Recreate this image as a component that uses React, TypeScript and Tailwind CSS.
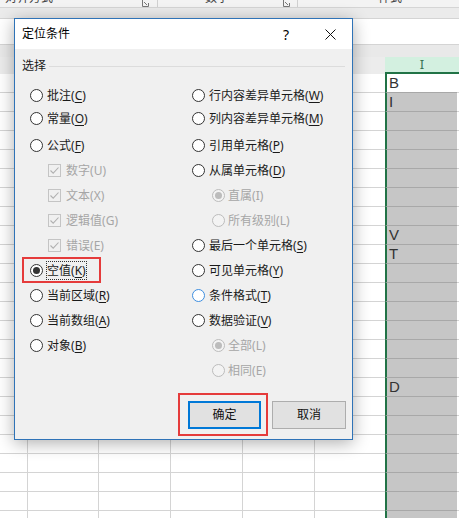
import React from "react";

type Item = {
  t: string;
  k: string;
  kind?: "radio" | "check" | "sub";
  disabled?: boolean;
  checked?: boolean;
  focus?: boolean;
  blue?: boolean;
};

const left: Item[] = [
  { t: "批注", k: "C" },
  { t: "常量", k: "O" },
  { t: "公式", k: "F" },
  { t: "数字", k: "U", kind: "check", disabled: true },
  { t: "文本", k: "X", kind: "check", disabled: true },
  { t: "逻辑值", k: "G", kind: "check", disabled: true },
  { t: "错误", k: "E", kind: "check", disabled: true },
  { t: "空值", k: "K", checked: true, focus: true },
  { t: "当前区域", k: "R" },
  { t: "当前数组", k: "A" },
  { t: "对象", k: "B" },
];

const right: Item[] = [
  { t: "行内容差异单元格", k: "W" },
  { t: "列内容差异单元格", k: "M" },
  { t: "引用单元格", k: "P" },
  { t: "从属单元格", k: "D" },
  { t: "直属", k: "I", kind: "sub", disabled: true, checked: true },
  { t: "所有级别", k: "L", kind: "sub", disabled: true },
  { t: "最后一个单元格", k: "S" },
  { t: "可见单元格", k: "Y" },
  { t: "条件格式", k: "T", blue: true },
  { t: "数据验证", k: "V" },
  { t: "全部", k: "L", kind: "sub", disabled: true, checked: true },
  { t: "相同", k: "E", kind: "sub", disabled: true },
];

function rowMargin(i: number) {
  if (i === 1) return "-mt-[2px]";
  if (i === 2) return "mt-[2px]";
  return "";
}

function Radio({ item }: { item: Item }) {
  const border = item.disabled
    ? "border-[#bcbcbc] bg-[#f3f3f3]"
    : item.blue
    ? "border-[#3d8ee0] bg-white"
    : "border-[#333333] bg-white";
  const dot = item.disabled ? "bg-[#bcbcbc]" : "bg-[#333333]";
  return (
    <div className={`w-[13px] h-[13px] rounded-full border ${border} flex items-center justify-center shrink-0`}>
      {item.checked ? <div className={`w-[7px] h-[7px] rounded-full ${dot}`} /> : null}
    </div>
  );
}

function Check() {
  return (
    <div className="w-[13px] h-[13px] border border-[#c4c4c4] shrink-0 flex items-center justify-center">
      <svg width="11" height="11" viewBox="0 0 11 11">
        <path d="M1.5 5.5 L4.2 8.2 L9.5 2.5" fill="none" stroke="#b0b0b0" strokeWidth="1.1" />
      </svg>
    </div>
  );
}

function LabelText({ item }: { item: Item }) {
  const color = item.disabled ? "text-[#a6a6a6]" : "text-[#1a1a1a]";
  const inner = (
    <>
      {item.t}(
      {item.disabled ? item.k : <span className="underline decoration-1 underline-offset-[2px]">{item.k}</span>})
    </>
  );
  if (item.focus) {
    return (
      <span className={`ml-[3px] border border-dotted border-[#333] h-[19px] leading-[17px] ${color}`}>{inner}</span>
    );
  }
  return <span className={`${item.kind === "check" ? "ml-[5px]" : item.kind === "sub" ? "ml-[3px]" : "ml-[4px]"} ${color}`}>{inner}</span>;
}

function Row({ item, i }: { item: Item; i: number }) {
  const indent = item.kind === "check" ? "pl-[18px]" : item.kind === "sub" ? "pl-[20px]" : "";
  return (
    <div className={`h-[25px] flex items-center ${indent} ${rowMargin(i)}`}>
      {item.kind === "check" ? <Check /> : <Radio item={item} />}
      <LabelText item={item} />
    </div>
  );
}

const cellText: Record<number, string> = { 0: "B", 1: "I", 8: "V", 9: "T", 16: "D" };

function Launcher() {
  return (
    <svg width="7" height="7" viewBox="0 0 7 7" className="shrink-0">
      <path d="M0.5 0 V6.5 H6.5 V3" fill="none" stroke="#777" strokeWidth="1" />
      <path d="M2 2 L5 5" stroke="#777" strokeWidth="1" />
    </svg>
  );
}

export default function App() {
  const rows = Array.from({ length: 24 }, (_, i) => i);
  return (
    <div className="relative w-[459px] h-[518px] overflow-hidden bg-white font-['Noto_Sans','Noto_Sans_CJK_SC',sans-serif]">
      {/* ribbon group labels */}
      <div className="h-[8px] flex bg-[#f3f3f3] border-b border-[#d5d5d5] overflow-hidden text-[12px] text-[#444]">
        <div className="w-[158px] flex justify-between items-start pl-[5px] pr-[8px] border-r border-[#d0d0d0]">
          <span className="-mt-[10px] leading-[16px]">对齐方式</span>
          <Launcher />
        </div>
        <div className="w-[140px] flex justify-between items-start pl-[47px] pr-[7px] border-r border-[#d0d0d0]">
          <span className="-mt-[10px] leading-[16px]">数字</span>
          <Launcher />
        </div>
        <div className="flex-1 pl-[80px]">
          <span className="-mt-[10px] leading-[16px] block">样式</span>
        </div>
      </div>
      <div className="h-[11px] bg-[#ebebeb] border-b border-[#d4d4d4]" />
      <div className="h-[26px] bg-white border-b border-[#d4d4d4]" />
      <div className="h-[12px] bg-[#e9e9e9]" />
      <div className="h-[17px] flex bg-[#ececec]">
        <div className="flex-1" />
        <div className="w-[74px] bg-[#d3f0e0] border-b-2 border-[#217346] flex items-center justify-center text-[13px] text-[#3a7454] leading-none">
          I
        </div>
      </div>
      {/* grid */}
      <div className="flex flex-col">
        {rows.map((i) => (
          <div key={i} className="flex h-[19px]">
            <div className="w-[28px] border-r border-b border-[#d4d4d4]" />
            <div className="w-[71px] border-r border-b border-[#d4d4d4]" />
            <div className="w-[72px] border-r border-b border-[#d4d4d4]" />
            <div className="w-[72px] border-r border-b border-[#d4d4d4]" />
            <div className="w-[72px] border-r border-b border-[#d4d4d4]" />
            <div className="w-[70px] border-b border-[#d4d4d4]" />
            <div
              className={`w-[72px] border-l-2 border-l-[#217346] border-b border-b-[#a8a8a8] pl-[2px] text-[15px] leading-[18px] text-[#333] font-['Liberation_Sans',sans-serif] ${
                i === 0 ? "bg-white" : "bg-[#c6c6c6]"
              }`}
            >
              {cellText[i] ?? ""}
            </div>
            <div className="flex-1 border-b border-[#d4d4d4]" />
          </div>
        ))}
      </div>

      {/* dialog */}
      <div className="absolute left-[14px] top-[18px] w-[339px] h-[422px] border border-[#2f73b7] bg-[#f0f0f0] flex flex-col shadow-[0_3px_16px_rgba(0,0,0,0.32)] text-[12px]">
        <div className="h-[30px] bg-white flex items-center">
          <span className="pl-[7px] flex-1 text-[12px] text-black">定位条件</span>
          <div className="w-[44px] h-full flex items-center justify-center text-[14px] text-black">?</div>
          <div className="w-[44px] h-full flex items-center justify-center">
            <svg width="11" height="11" viewBox="0 0 11 11">
              <path d="M0.5 0.5 L10.5 10.5 M10.5 0.5 L0.5 10.5" stroke="#111" strokeWidth="1" />
            </svg>
          </div>
        </div>
        <div className="flex-1 flex flex-col">
          <div className="mt-[9px] h-[16px] flex items-center pl-[7px] pr-[7px]">
            <span className="text-[#1a1a1a]">选择</span>
            <div className="ml-[3px] flex-1 h-px bg-[#dcdcdc]" />
          </div>
          <div className="mt-[9px] flex pl-[15px]">
            <div className="w-[162px] flex flex-col">
              {left.map((it, i) => (
                <Row key={i} item={it} i={i} />
              ))}
            </div>
            <div className="flex-1 flex flex-col">
              {right.map((it, i) => (
                <Row key={i} item={it} i={i} />
              ))}
            </div>
          </div>
          <div className="mt-[18px] flex justify-end gap-[11px] pr-[6px]">
            <div className="w-[73px] h-[28px] border-2 border-[#0078d7] bg-[#e1e1e1] flex items-center justify-center text-[#111]">
              确定
            </div>
            <div className="w-[74px] h-[28px] border border-[#adadad] bg-[#e1e1e1] flex items-center justify-center text-[#111]">
              取消
            </div>
          </div>
        </div>
        {/* red annotation boxes */}
        <div className="absolute left-[7px] top-[238px] w-[79px] h-[26px] border-2 border-[#e53b3b]" />
        <div className="absolute left-[163px] top-[374px] w-[90px] h-[43px] border-2 border-[#e53b3b]" />
      </div>
    </div>
  );
}
